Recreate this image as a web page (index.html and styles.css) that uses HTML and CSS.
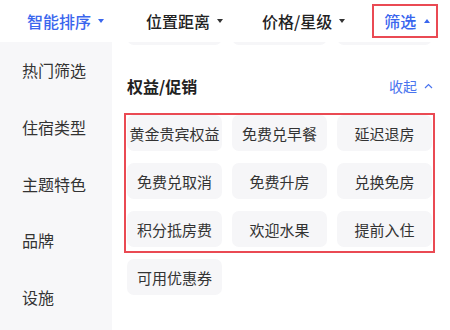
FILE: index.html
```html
<!DOCTYPE html>
<html lang="zh-CN">
<head>
<meta charset="utf-8">
<title>筛选</title>
<link rel="stylesheet" href="styles.css">
</head>
<body>
<div class="page">
  <div class="topbar">
    <div class="tab tab-active tab-1"><span>智能排序</span><i class="tri tri-down tri-blue"></i></div>
    <div class="tab tab-2"><span>位置距离</span><i class="tri tri-down"></i></div>
    <div class="tab tab-3"><span>价格/星级</span><i class="tri tri-down"></i></div>
    <div class="tab tab-active tab-filter"><span>筛选</span><i class="tri tri-up tri-blue"></i></div>
  </div>
  <div class="main">
    <div class="sidebar">
      <div class="side-item">热门筛选</div>
      <div class="side-item">住宿类型</div>
      <div class="side-item">主题特色</div>
      <div class="side-item">品牌</div>
      <div class="side-item">设施</div>
    </div>
    <div class="content">
      <div class="chip-grid stub-row">
        <div class="chip"></div>
        <div class="chip"></div>
        <div class="chip"></div>
      </div>
      <div class="section-head">
        <div class="section-title">权益/促销</div>
        <div class="collapse">收起<svg class="chev" width="9" height="6" viewBox="0 0 9 6"><path d="M1 5 L4.5 1.5 L8 5" fill="none" stroke="#4a74ee" stroke-width="1.2"/></svg></div>
      </div>
      <div class="promo-box">
        <div class="chip-grid">
          <div class="chip">黄金贵宾权益</div>
          <div class="chip">免费兑早餐</div>
          <div class="chip">延迟退房</div>
          <div class="chip">免费兑取消</div>
          <div class="chip">免费升房</div>
          <div class="chip">兑换免房</div>
          <div class="chip">积分抵房费</div>
          <div class="chip">欢迎水果</div>
          <div class="chip">提前入住</div>
        </div>
      </div>
      <div class="chip-grid extra">
        <div class="chip">可用优惠券</div>
      </div>
      <div class="section-head next">
        <div class="section-title">住宿类型</div>
      </div>
    </div>
  </div>
</div>
</body>
</html>
```

FILE: styles.css
```css
* { box-sizing: border-box; }
html, body { margin: 0; padding: 0; }
body {
  width: 450px;
  height: 330px;
  overflow: hidden;
  background: #ffffff;
  font-family: "Noto Sans CJK SC", "Noto Sans", sans-serif;
  color: #222;
}
.page { width: 450px; height: 330px; display: flex; flex-direction: column; }

.topbar {
  height: 42px;
  display: flex;
  align-items: center;
  padding-left: 27px;
  flex-shrink: 0;
}
.tab {
  display: flex;
  align-items: center;
  font-size: 16px;
  font-weight: 500;
  line-height: 22px;
  color: #222;
}
.tab-active { color: #3a66ee; }
.tab-1 { margin-right: 42px; }
.tab-2 { margin-right: 39px; }
.tab-3 { margin-right: 27px; }
.tab-filter {
  height: 34px;
  border: 2px solid #ea4a53;
  padding: 0 6px 0 10px;
}
.tri {
  display: inline-block;
  width: 0;
  height: 0;
  margin-left: 7px;
  border-left: 3.5px solid transparent;
  border-right: 3.5px solid transparent;
}
.tri-down { border-top: 4px solid #333; }
.tri-up { border-bottom: 4px solid #333; margin-left: 8px; }
.tri-down.tri-blue { border-top-color: #3a66ee; }
.tri-up.tri-blue { border-bottom-color: #3a66ee; }

.main { flex: 1; display: flex; min-height: 0; }
.sidebar {
  width: 112px;
  flex-shrink: 0;
  background: #f7f7f9;
}
.side-item {
  height: 56.7px;
  display: flex;
  align-items: center;
  padding-left: 22px;
  font-size: 16px;
  color: #333;
}

.content {
  flex: 1;
  padding: 0 18px 0 15px;
  overflow: hidden;
}
.chip-grid {
  display: grid;
  grid-template-columns: repeat(3, 1fr);
  gap: 12px 10px;
}
.chip {
  height: 36px;
  border-radius: 7px;
  background: #f6f6f8;
  display: flex;
  align-items: center;
  justify-content: center;
  font-size: 15px;
  color: #333;
  white-space: nowrap;
}
.stub-row { margin-top: -33px; }

.section-head {
  height: 24px;
  margin-top: 29px;
  display: flex;
  align-items: center;
  justify-content: space-between;
}
.section-title {
  font-size: 16px;
  font-weight: 700;
  color: #222;
  line-height: 24px;
}
.collapse {
  display: flex;
  align-items: center;
  font-size: 14px;
  color: #4a74ee;
  margin-right: -1px;
}
.chev { margin-left: 7px; }

.promo-box {
  margin: 15px -3px 0 -3px;
  border: 2px solid #ea4a53;
  padding: 0 1px 4px 1px;
}
.extra { margin-top: 6px; }
.section-head.next { margin-top: 32px; }
```
